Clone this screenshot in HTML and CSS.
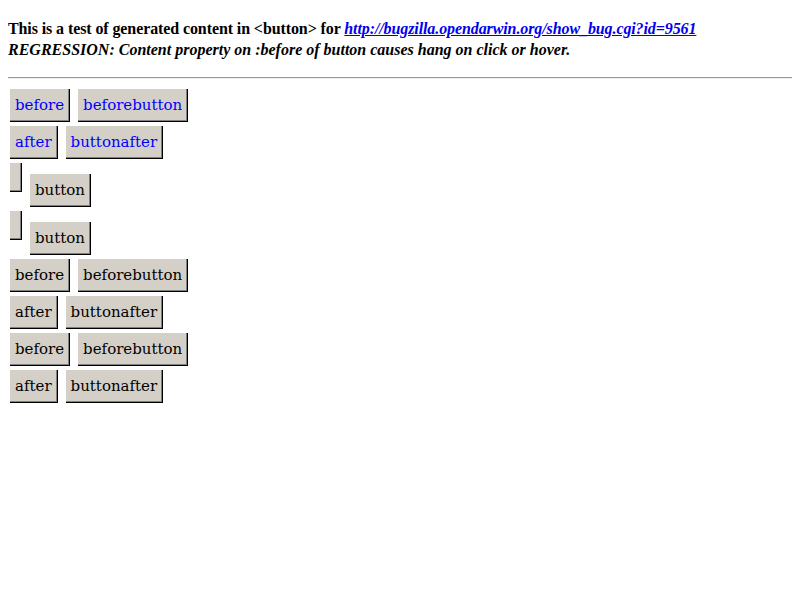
FILE: index.html
```html
<!DOCTYPE html>
<html>
<head>
<meta charset="utf-8">
<link rel="stylesheet" href="styles.css">
</head>
<body>
<div class="intro">
  <p class="line first">This is a test of generated content in &lt;button&gt; for <a class="bug" href="#">http://bugzilla.opendarwin.org/show_bug.cgi?id=9561</a></p>
  <p class="line reg">REGRESSION: Content property on :before of button causes hang on click or hover.</p>
</div>
<hr class="rule">
<div class="rows">
  <div class="row"><button class="btn blue">before</button><button class="btn blue">beforebutton</button></div>
  <div class="row"><button class="btn blue">after</button><button class="btn blue">buttonafter</button></div>
  <div class="row"><button class="btn empty"></button><button class="btn low">button</button></div>
  <div class="row"><button class="btn empty"></button><button class="btn low">button</button></div>
  <div class="row"><button class="btn">before</button><button class="btn">beforebutton</button></div>
  <div class="row"><button class="btn">after</button><button class="btn">buttonafter</button></div>
  <div class="row"><button class="btn">before</button><button class="btn">beforebutton</button></div>
  <div class="row"><button class="btn">after</button><button class="btn">buttonafter</button></div>
</div>
</body>
</html>
```
FILE: styles.css
```css
html, body {
  background: #ffffff;
}
body {
  margin: 8px;
  font-family: "Liberation Serif", "Times New Roman", serif;
  font-size: 16px;
  color: #000;
}
.intro {
  padding-top: 10px;
}
.line {
  margin: 0;
  font-weight: bold;
  line-height: 21px;
}
.first {
  letter-spacing: -0.1px;
}
.reg {
  font-style: italic;
}
.bug {
  color: #0000ee;
  font-style: italic;
  text-decoration: underline;
}
.rule {
  margin: 17px 0 10px 0;
  border: none;
  border-top: 1px solid #9a9a9a;
  border-bottom: 1px solid #eeeeee;
  height: 0;
}
.rows {
  display: flex;
  flex-direction: column;
  gap: 4px;
  padding-left: 2px;
}
.row {
  display: flex;
  align-items: flex-start;
  gap: 8px;
}
.btn {
  margin: 0;
  font-family: "DejaVu Serif", serif;
  font-size: 15px;
  line-height: 19px;
  color: #000;
  background: #d4d0c8;
  border: none;
  border-right: 1px solid #000;
  border-bottom: 1px solid #000;
  box-shadow: inset -1px -1px 0 #808080;
  padding: 7px 5px 7px 5px;
  height: 33px;
  box-sizing: border-box;
}
.blue {
  color: #0000ff;
}
.empty {
  width: 12px;
  height: 29px;
  padding: 0;
}
.low {
  margin-top: 11px;
}
```
